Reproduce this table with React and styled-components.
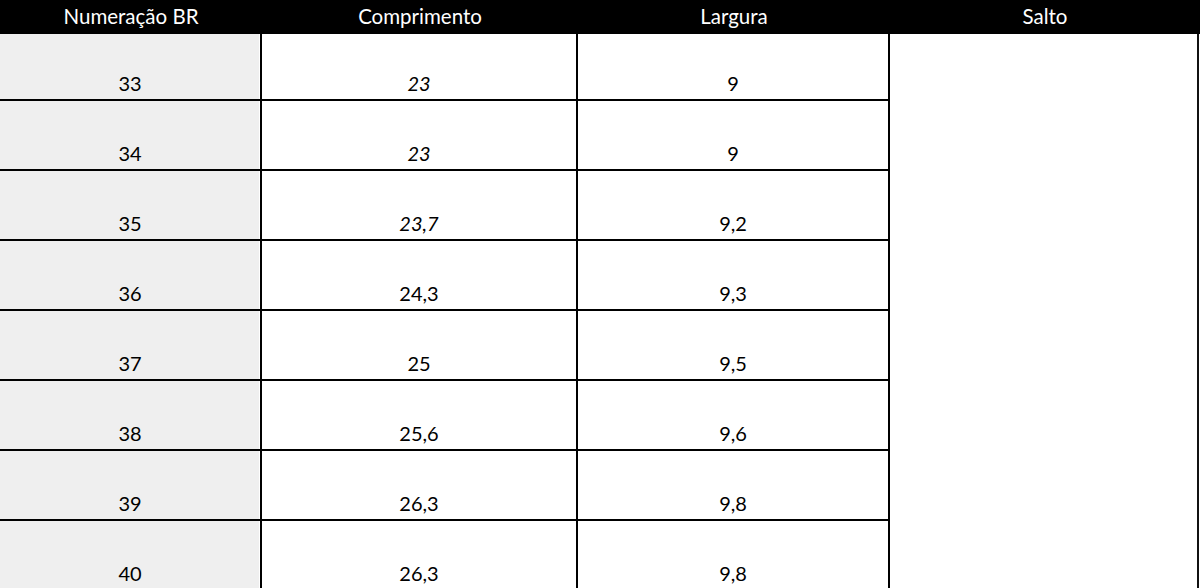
import React from "react";
import styled, { createGlobalStyle } from "styled-components";

const rows = [
  { br: "33", comp: "23", larg: "9", italic: true },
  { br: "34", comp: "23", larg: "9", italic: true },
  { br: "35", comp: "23,7", larg: "9,2", italic: true },
  { br: "36", comp: "24,3", larg: "9,3" },
  { br: "37", comp: "25", larg: "9,5" },
  { br: "38", comp: "25,6", larg: "9,6" },
  { br: "39", comp: "26,3", larg: "9,8" },
  { br: "40", comp: "26,3", larg: "9,8" },
];

const GlobalStyle = createGlobalStyle`
  html, body {
    margin: 0;
    padding: 0;
    background: #fff;
    overflow: hidden;
  }
  body {
    font-family: Lato, "Open Sans", sans-serif;
    color: #000;
  }
`;

const cols = "262px 316px 312px 310px";

const Sheet = styled.div`
  width: 1200px;
`;

const HeadRow = styled.div`
  display: grid;
  grid-template-columns: ${cols};
  height: 34px;
  background: #000;
`;

const HeadCell = styled.div`
  display: flex;
  align-items: center;
  justify-content: center;
  color: #fff;
  font-size: 20.5px;
  padding-bottom: 2px;
`;

const Body = styled.div`
  display: grid;
  grid-template-columns: ${cols};
  grid-template-rows: 67px repeat(7, 70px);
`;

const Cell = styled.div`
  display: flex;
  align-items: flex-end;
  justify-content: center;
  padding-bottom: 4px;
  box-sizing: border-box;
  border-bottom: 2px solid #000;
  border-right: 2px solid #000;
  font-size: 20px;
  font-style: ${(p) => (p.$italic ? "italic" : "normal")};
  background: ${(p) => (p.$shade ? "#efefef" : "#fff")};
  box-shadow: ${(p) => (p.$shade ? "inset -1px 0 0 #fff" : "none")};
`;

const SaltoCell = styled.div`
  grid-column: 4;
  grid-row: 1 / -1;
  box-sizing: border-box;
  border-right: 2px solid #111;
  margin-right: 1px;
  background: #fff;
`;

export default function App() {
  return (
    <>
      <GlobalStyle />
      <Sheet>
        <HeadRow>
          <HeadCell>Numeração BR</HeadCell>
          <HeadCell>Comprimento</HeadCell>
          <HeadCell>Largura</HeadCell>
          <HeadCell>Salto</HeadCell>
        </HeadRow>
        <Body>
          {rows.map((r, i) => (
            <React.Fragment key={r.br}>
              <Cell $shade style={{ gridRow: i + 1, gridColumn: 1 }}>
                {r.br}
              </Cell>
              <Cell $italic={r.italic} style={{ gridRow: i + 1, gridColumn: 2 }}>
                {r.comp}
              </Cell>
              <Cell style={{ gridRow: i + 1, gridColumn: 3 }}>{r.larg}</Cell>
            </React.Fragment>
          ))}
          <SaltoCell />
        </Body>
      </Sheet>
    </>
  );
}
